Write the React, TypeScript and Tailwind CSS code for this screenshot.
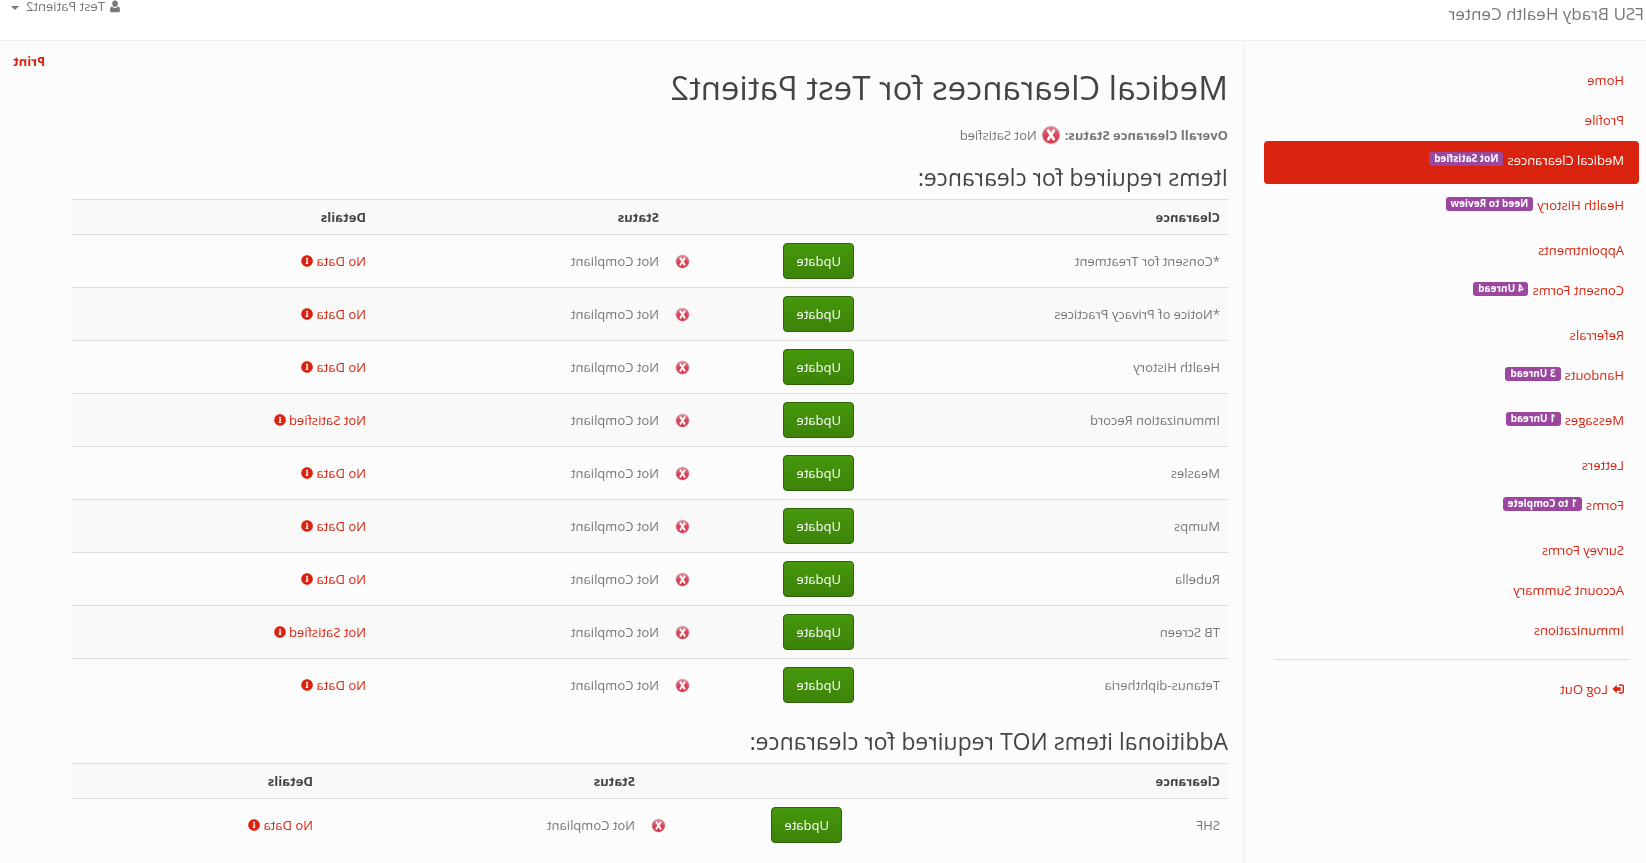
import React from 'react';
import { FaInfoCircle } from 'react-icons/fa';

interface NavItem {
    label: string;
    badge?: string;
    active?: boolean;
}

interface Clearance {
    name: string;
    details: string;
}

interface TableProps {
    title: string;
    nameCol: string;
    updateCol: string;
    statusCol: string;
    rows: Clearance[];
}

const navItems: NavItem[] = [
    { label: 'Home' },
    { label: 'Profile' },
    { label: 'Medical Clearances', badge: 'Not Satisfied', active: true },
    { label: 'Health History', badge: 'Need to Review' },
    { label: 'Appointments' },
    { label: 'Consent Forms', badge: '4 Unread' },
    { label: 'Referrals' },
    { label: 'Handouts', badge: '3 Unread' },
    { label: 'Messages', badge: '1 Unread' },
    { label: 'Letters' },
    { label: 'Forms', badge: '1 to Complete' },
    { label: 'Survey Forms' },
    { label: 'Account Summary' },
    { label: 'Immunizations' },
];

const requiredItems: Clearance[] = [
    { name: '*Consent for Treatment', details: 'No Data' },
    { name: '*Notice of Privacy Practices', details: 'No Data' },
    { name: 'Health History', details: 'No Data' },
    { name: 'Immunization Record', details: 'Not Satisfied' },
    { name: 'Measles', details: 'No Data' },
    { name: 'Mumps', details: 'No Data' },
    { name: 'Rubella', details: 'No Data' },
    { name: 'TB Screen', details: 'Not Satisfied' },
    { name: 'Tetanus-diphtheria', details: 'No Data' },
];

const additionalItems: Clearance[] = [{ name: 'SHF', details: 'No Data' }];

const UserIcon: React.FC = () => (
    <svg viewBox="0 0 12 13" className="w-3 h-[13px]" fill="currentColor" aria-hidden="true">
        <path d="M6 .5C7.9.5 8.8 1.8 8.8 3.6 8.8 5.6 7.6 7 6 7S3.200 5.600 3.200 3.600C3.200 1.800 4.100.5 6 .5Z" />
        <path d="M3 6.200C3.800 7.400 4.800 8 6 8s2.200-.6 3-1.800c1.200.5 1.900 1.700 1.900 3.300v1.600c0 .8-.5 1.200-1.200 1.200H2.300c-.7 0-1.200-.4-1.200-1.200V9.500C1.100 7.900 1.800 6.700 3 6.200Z" />
    </svg>
);

const LogOutIcon: React.FC = () => (
    <svg viewBox="1 0 12 12" className="w-3 h-3" aria-hidden="true">
        <path d="M6 2H3.200C2.200 2 1.700 2.500 1.700 3.300v5.400C1.700 9.500 2.200 10 3.200 10H6" fill="none" stroke="currentColor" strokeWidth="1.4" />
        <path d="M8.200 1.800 12.600 6l-4.400 4.200V7.800H4.300V4.200h3.900Z" fill="currentColor" />
    </svg>
);

const ErrorIcon: React.FC<{ className: string }> = ({ className }) => (
    <svg viewBox="0 0 16 16" className={className} role="img" aria-label="Not compliant">
        <defs>
            <linearGradient id="errorFill" x1="0" y1="0" x2="0" y2="1">
                <stop offset="0" stopColor="#e58a97" />
                <stop offset="0.5" stopColor="#d8475c" />
                <stop offset="1" stopColor="#e0324c" />
            </linearGradient>
        </defs>
        <circle cx="8" cy="8" r="7.600" fill="#dcd3d6" />
        <circle cx="8" cy="8" r="6.800" fill="url(#errorFill)" />
        <path d="M5.800 4.600 10.200 11.400M10.200 4.600 5.800 11.400" stroke="#fff" strokeWidth="2.200" strokeLinecap="round" />
    </svg>
);

const ClearanceTable: React.FC<TableProps> = ({ title, nameCol, updateCol, statusCol, rows }) => (
    <section className="mt-[18px]">
        <h3 className="text-[23px] leading-[25px] mb-[9px] text-[#444444]">{title}</h3>
        <table className="w-full table-fixed text-left">
            <colgroup>
                <col className={nameCol} />
                <col className={updateCol} />
                <col className="w-8" />
                <col className={statusCol} />
                <col />
            </colgroup>
            <thead>
                <tr className="border-t border-[#dddddd] bg-[#f9f9f9] text-[#444444]">
                    <th className="p-2">Clearance</th>
                    <td className="p-2"></td>
                    <td className="p-2"></td>
                    <th className="p-2">Status</th>
                    <th className="p-2">Details</th>
                </tr>
            </thead>
            <tbody>
                {rows.map((row) => (
                    <tr key={row.name} className="border-t border-[#dddddd] even:bg-[#f9f9f9]">
                        <td className="p-2">{row.name}</td>
                        <td className="p-2">
                            <button
                                type="button"
                                className="block h-9 px-3 border border-[#2e6409] rounded bg-linear-to-b from-[#46980c] to-[#3d8309] text-white cursor-pointer"
                            >
                                Update
                            </button>
                        </td>
                        <td className="p-2">
                            <ErrorIcon className="w-[15px] h-[15px] ml-auto" />
                        </td>
                        <td className="p-2">Not Compliant</td>
                        <td className="p-2">
                            <a href="#" className="inline-flex items-center gap-[3px] text-[#d9230f]">
                                {row.details}
                                <FaInfoCircle className="w-3 h-3" />
                            </a>
                        </td>
                    </tr>
                ))}
            </tbody>
        </table>
    </section>
);

const App: React.FC = () => {
    return (
        <div className="-scale-x-100 min-h-screen flex flex-col bg-[#fcfcfc] font-['Open_Sans',sans-serif] text-[13px] leading-[18px] text-[#777777]">
            <header className="flex justify-between items-start h-[41px] bg-white border-b border-[#eeeeee]">
                <a href="#" className="pl-[2px] pt-1 text-[17px] leading-5">FSU Brady Health Center</a>
                <button type="button" className="flex items-center gap-1 pr-[11px] h-3 cursor-pointer">
                    <UserIcon />
                    Test Patient2
                    <svg viewBox="0 0 8 4" className="w-2 h-1 ml-[3px] mt-1" fill="currentColor" aria-hidden="true">
                        <path d="M0 0h8L4 4Z" />
                    </svg>
                </button>
            </header>

            <div className="flex flex-1">
                <nav className="w-[403px] shrink-0 pt-5 pl-[7px] pr-5 border-r border-[#eeeeee]">
                    <ul className="flex flex-col gap-0.5">
                        {navItems.map((item) => (
                            <li key={item.label}>
                                <a
                                    href="#"
                                    className={`flex items-start gap-1 px-[15px] pt-2.5 rounded ${item.badge ? 'pb-[15px]' : 'pb-2.5'} ${item.active ? 'bg-[#d9230f] text-white' : 'text-[#d9230f]'}`}
                                >
                                    {item.label}
                                    {item.badge && (
                                        <span className="mt-px h-[14px] px-[5px] rounded-[3px] bg-[#9b479f] text-[10px] leading-[13px] font-bold text-white">
                                            {item.badge}
                                        </span>
                                    )}
                                </a>
                            </li>
                        ))}
                    </ul>
                    <hr className="mt-2.5 mx-2.5 border-[#dddddd]" />
                    <a href="#" className="flex items-center gap-1 mt-2.5 px-[15px] py-2.5 text-[#d9230f]">
                        <LogOutIcon />
                        Log Out
                    </a>
                </nav>

                <main className="flex-1 min-w-0 pt-7 px-[15px]">
                    <h1 className="text-[33px] leading-[37px] mb-[17px] text-[#444444]">Medical Clearances for Test Patient2</h1>
                    <p className="flex items-center gap-1 h-6">
                        <strong>Overall Clearance Status:</strong>
                        <ErrorIcon className="w-5 h-5" />
                        Not Satisfied
                    </p>
                    <ClearanceTable
                        title="Items required for clearance:"
                        nameCol="w-[366px]"
                        updateCol="w-[163px]"
                        statusCol="w-[293px]"
                        rows={requiredItems}
                    />
                    <ClearanceTable
                        title="Additional items NOT required for clearance:"
                        nameCol="w-[378px]"
                        updateCol="w-[175px]"
                        statusCol="w-[322px]"
                        rows={additionalItems}
                    />
                </main>

                <aside className="pt-[11px] pl-3 pr-[13px]">
                    <a href="#" className="font-bold text-[#d9230f]">Print</a>
                </aside>
            </div>
        </div>
    );
};

export default App;
